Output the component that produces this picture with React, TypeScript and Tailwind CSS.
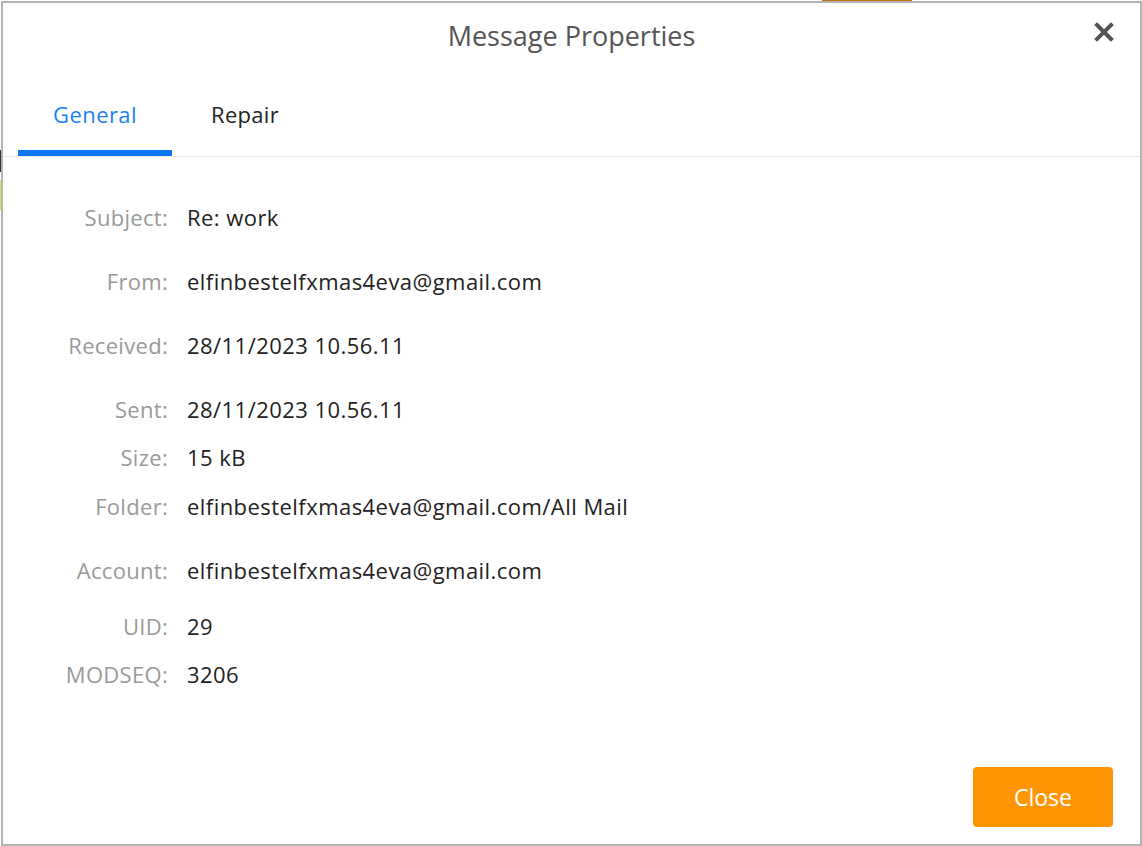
import React from "react";

const rows: { label: string; value: string; mt: string }[] = [
  { label: "Subject:", value: "Re: work", mt: "mt-0" },
  { label: "From:", value: "elfinbestelfxmas4eva@gmail.com", mt: "mt-[36px]" },
  { label: "Received:", value: "28/11/2023 10.56.11", mt: "mt-[36px]" },
  { label: "Sent:", value: "28/11/2023 10.56.11", mt: "mt-[36px]" },
  { label: "Size:", value: "15 kB", mt: "mt-[20px]" },
  { label: "Folder:", value: "elfinbestelfxmas4eva@gmail.com/All Mail", mt: "mt-[21px]" },
  { label: "Account:", value: "elfinbestelfxmas4eva@gmail.com", mt: "mt-[36px]" },
  { label: "UID:", value: "29", mt: "mt-[28px]" },
  { label: "MODSEQ:", value: "3206", mt: "mt-[20px]" },
];

export default function App() {
  return (
    <div
      className="relative w-[1142px] h-[846px] overflow-hidden bg-white"
      style={{ fontFamily: '"Open Sans", "Noto Sans", sans-serif' }}
    >
      {/* background hints behind dialog */}
      <div className="absolute left-[822px] top-0 w-[90px] h-[3px] bg-[#c8770f]" />
      <div className="absolute left-0 top-[150px] w-[2px] h-[22px] bg-[#333]" />
      <div className="absolute left-0 top-[180px] w-[2px] h-[30px] bg-[#e4e055]" />

      {/* dialog */}
      <div className="absolute left-[1px] top-[1px] w-[1141px] h-[845px] border-2 border-[#b4b4b4] bg-white flex flex-col">
        {/* header */}
        <div className="relative h-[70px] flex items-center justify-center">
          <div className="text-[27px] text-[#555555] mt-[-4px]">Message Properties</div>
          <button className="absolute right-[23px] top-[16px] w-[26px] h-[26px] flex items-center justify-center">
            <svg width="20" height="20" viewBox="0 0 20 20">
              <path d="M3 3 L17 17 M17 3 L3 17" stroke="#555555" strokeWidth="4" strokeLinecap="square" />
            </svg>
          </button>
        </div>

        {/* tabs */}
        <div className="flex border-b border-[#e6e6e6] pl-[15px] h-[84px] items-stretch">
          <div className="w-[154px] flex items-center justify-center border-b-[6px] border-[#0a78f5] text-[22px] tracking-[0.4px] text-[#1a7ff2] pt-[6px]">
            General
          </div>
          <div className="w-[146px] flex items-center justify-center text-[22px] tracking-[0.3px] text-[#222222] pt-[6px] pb-[6px]">
            Repair
          </div>
        </div>

        {/* body */}
        <div className="flex-1 flex flex-col pt-[46px]">
          {rows.map((r) => (
            <div key={r.label} className={`flex items-center ${r.mt} h-[28px]`}>
              <div className="w-[165px] text-right text-[22px] tracking-[0.3px] text-[#999999] whitespace-nowrap">{r.label}</div>
              <div className="pl-[19px] text-[22px] tracking-[0.45px] text-[#222222] whitespace-nowrap">{r.value}</div>
            </div>
          ))}
        </div>

        {/* footer */}
        <div className="flex justify-end pr-[27px] pb-[17px]">
          <button className="w-[140px] h-[60px] rounded-[4px] bg-[#ff9500] text-white text-[23px]">Close</button>
        </div>
      </div>
    </div>
  );
}
